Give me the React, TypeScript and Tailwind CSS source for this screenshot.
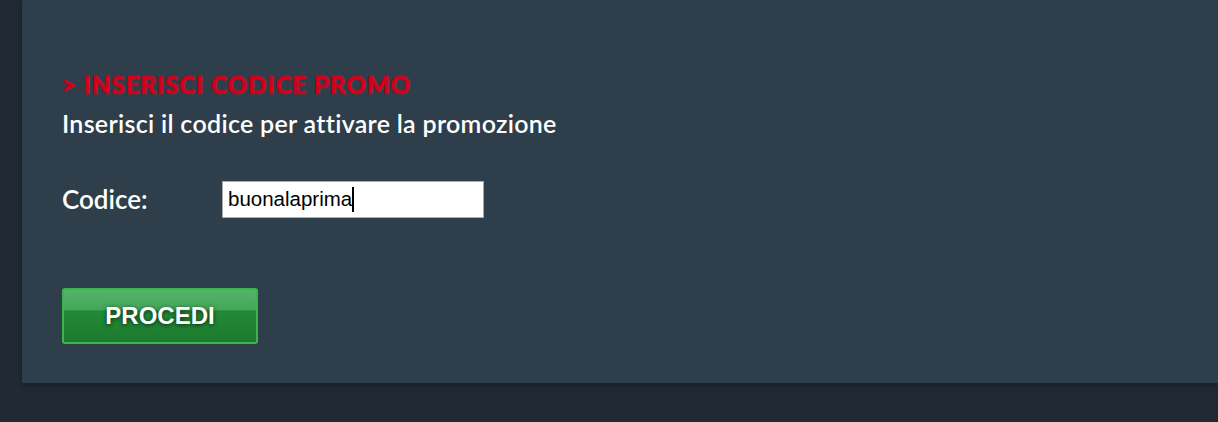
export default function App() {
  return (
    <div className="w-[1218px] h-[422px] bg-[#212a33] overflow-hidden">
      <div className="ml-[22px] h-[383px] bg-[#2e3e4a] shadow-[0_2px_6px_rgba(0,0,0,0.35)] pl-[40px] pt-[70px]">
        <h2 className="font-['Lato',sans-serif] font-black text-[24px] leading-[30px] text-[#d0021b] tracking-[1px] [-webkit-text-stroke:0.7px_#d0021b]">
          &gt; INSERISCI CODICE PROMO
        </h2>
        <p className="font-['Lato',sans-serif] font-semibold text-[25px] leading-[30px] text-white mt-[8px] tracking-[0.3px]">
          Inserisci il codice per attivare la promozione
        </p>
        <div className="flex items-center mt-[42px]">
          <label className="w-[160px] font-['Lato',sans-serif] font-semibold text-[26px] text-white">
            Codice:
          </label>
          <div className="w-[262px] h-[37px] bg-white border border-[#a9a9a9] flex items-center px-[5px]">
            <span className="font-['Liberation_Sans',Arial,sans-serif] text-[20.5px] text-black leading-none">
              buonalaprima
            </span>
            <span className="w-[2px] h-[25px] bg-black" />
          </div>
        </div>
        <button className="mt-[69px] w-[196px] h-[56px] rounded-[3px] border-2 border-[#3db54d] bg-[linear-gradient(to_bottom,#52b466_0%,#45a659_38%,#238a37_40%,#1c7a2e_100%)] font-['Liberation_Sans',Arial,sans-serif] font-bold text-[24px] text-white [text-shadow:0_1px_4px_rgba(0,0,0,0.7)]">
          PROCEDI
        </button>
      </div>
    </div>
  );
}
